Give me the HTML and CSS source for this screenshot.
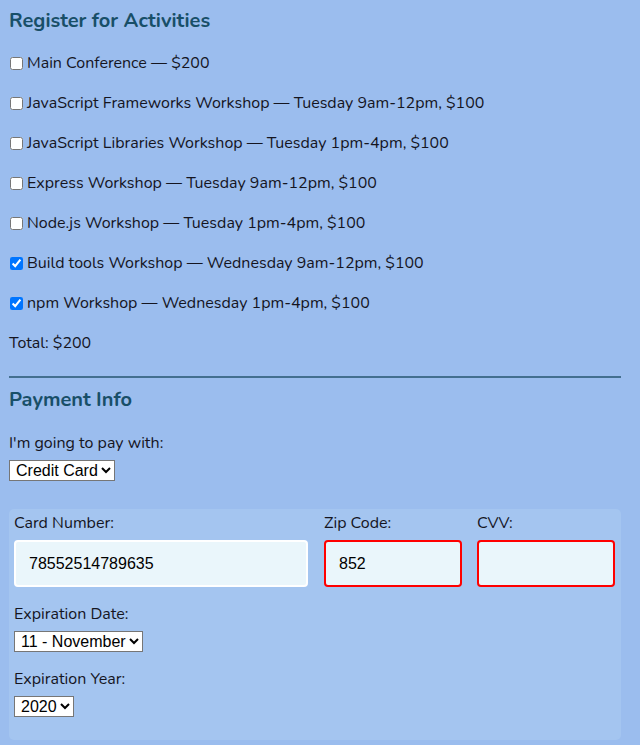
FILE: index.html
```html
<!DOCTYPE html>
<html lang="en">
<head>
<meta charset="utf-8">
<title>Register</title>
<link rel="stylesheet" href="styles.css">
</head>
<body>
<form class="form">
  <fieldset class="activities">
    <h2 class="section-title">Register for Activities</h2>
    <label class="activity"><input type="checkbox" class="check"> Main Conference — $200</label>
    <label class="activity"><input type="checkbox" class="check"> JavaScript Frameworks Workshop — Tuesday 9am-12pm, $100</label>
    <label class="activity"><input type="checkbox" class="check"> JavaScript Libraries Workshop — Tuesday 1pm-4pm, $100</label>
    <label class="activity"><input type="checkbox" class="check"> Express Workshop — Tuesday 9am-12pm, $100</label>
    <label class="activity"><input type="checkbox" class="check"> Node.js Workshop — Tuesday 1pm-4pm, $100</label>
    <label class="activity"><input type="checkbox" class="check" checked> Build tools Workshop — Wednesday 9am-12pm, $100</label>
    <label class="activity"><input type="checkbox" class="check" checked> npm Workshop — Wednesday 1pm-4pm, $100</label>
    <p class="total">Total: $200</p>
  </fieldset>
  <hr class="divider">
  <fieldset class="payment">
    <h2 class="section-title payment-title">Payment Info</h2>
    <label class="field-label pay-label" for="payment">I'm going to pay with:</label>
    <select id="payment" class="select">
      <option>Credit Card</option>
      <option>PayPal</option>
      <option>Bitcoin</option>
    </select>
    <div class="credit-card">
      <div class="cc-row">
        <div class="cc-col cc-num">
          <label class="field-label cc-label" for="cc-num">Card Number:</label>
          <input id="cc-num" class="text-input" type="text" value="78552514789635">
        </div>
        <div class="cc-col cc-zip">
          <label class="field-label cc-label" for="zip">Zip Code:</label>
          <input id="zip" class="text-input invalid" type="text" value="852">
        </div>
        <div class="cc-col cc-cvv">
          <label class="field-label cc-label" for="cvv">CVV:</label>
          <input id="cvv" class="text-input invalid" type="text" value="">
        </div>
      </div>
      <label class="field-label exp-label" for="exp-month">Expiration Date:</label>
      <select id="exp-month" class="select">
        <option>11 - November</option>
      </select>
      <label class="field-label exp-label year-label" for="exp-year">Expiration Year:</label>
      <select id="exp-year" class="select">
        <option>2020</option>
      </select>
    </div>
  </fieldset>
</form>
</body>
</html>
```

FILE: styles.css
```css
html, body {
  margin: 0;
  padding: 0;
  background: #9bbdee;
}
body {
  font-family: "Nunito", "Lato", "Noto Sans", sans-serif;
  font-size: 16px;
  color: #15151f;
}
.form {
  padding: 0 19px 0 9px;
}
fieldset {
  border: none;
  margin: 0;
  padding: 0;
  min-width: 0;
}
.section-title {
  margin: 9px 0 20px;
  font-size: 20px;
  line-height: 24px;
  font-weight: 700;
  color: #184f68;
}
.activity {
  display: flex;
  align-items: center;
  height: 20px;
  line-height: 20px;
  margin-bottom: 20px;
}
.check {
  margin: 0 4px 0 1px;
  width: 13px;
  height: 13px;
  flex: none;
}
.total {
  margin: 0;
  line-height: 20px;
}
.divider {
  border: none;
  height: 2px;
  background: #436f8f;
  margin: 23px 0 0;
}
.payment-title {
  margin: 10px 0 21px;
}
.field-label {
  display: block;
  line-height: 20px;
  margin-bottom: 8px;
}
.pay-label {
  margin-bottom: 7px;
}
.select {
  font-family: Arial, "Liberation Sans", sans-serif;
  font-size: 16px;
  color: #000;
  background: #fff;
  border: 1px solid #767676;
  border-radius: 0;
  height: 21px;
  padding: 0 0 0 2px;
  display: block;
}
.credit-card {
  margin-top: 28px;
  background: #a4c5f0;
  border-radius: 5px;
  padding: 4px 6px 23px 5px;
}
.cc-row {
  display: flex;
}
.cc-label {
  margin-bottom: 7px;
}
.cc-num { width: 294px; margin-right: 16px; }
.cc-zip { width: 138px; margin-right: 15px; }
.cc-cvv { width: 138px; }
.text-input {
  box-sizing: border-box;
  width: 100%;
  height: 47px;
  border: 2px solid #fff;
  border-radius: 4px;
  background: #eaf6fb;
  font-family: Arial, "Liberation Sans", sans-serif;
  font-size: 16px;
  color: #000;
  padding: 0 0 0 13px;
  margin: 0;
}
.text-input.invalid {
  border-color: #f00;
}
.exp-label {
  margin-top: 17px;
  margin-bottom: 7px;
}
```
